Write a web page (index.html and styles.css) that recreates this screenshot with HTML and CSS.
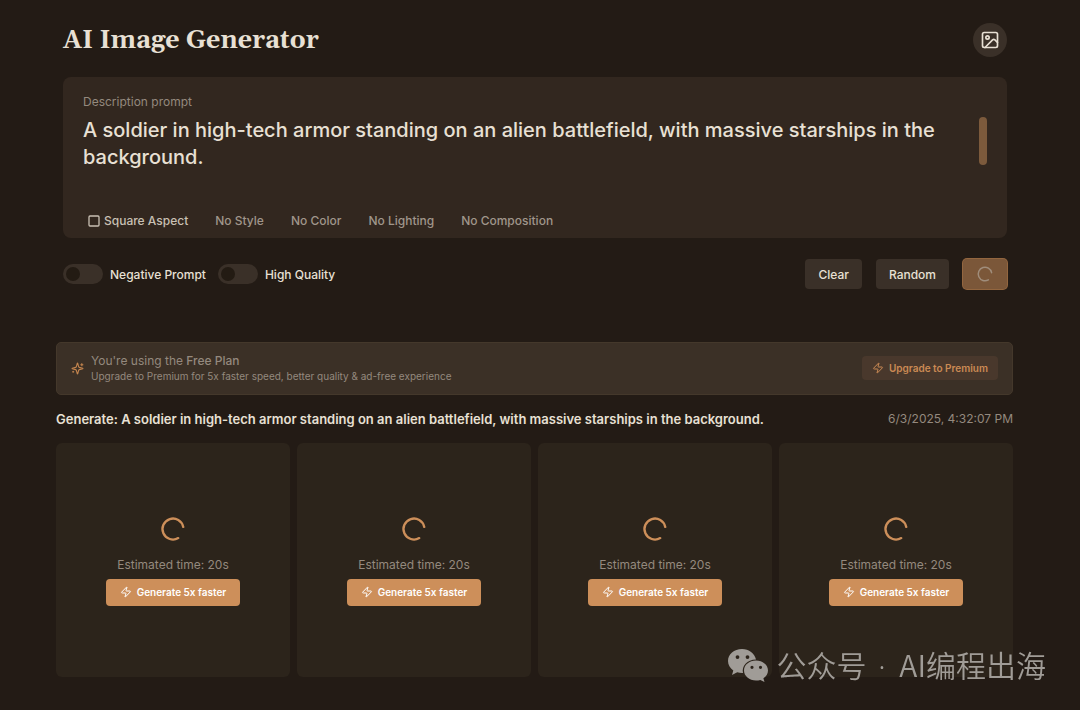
FILE: index.html
```html
<!DOCTYPE html>
<html lang="en">
<head>
    <meta charset="UTF-8">
    <meta name="viewport" content="width=device-width, initial-scale=1.0">
    <title>AI Image Generator</title>
    <link rel="stylesheet" href="styles.css">
</head>
<body>
    <!-- shared icons -->
    <svg width="0" height="0" class="sprite" aria-hidden="true">
        <symbol id="bolt" viewBox="0 0 24 24">
            <path d="M4 14a1 1 0 0 1-.78-1.63l9.9-10.2a.5.5 0 0 1 .86.46l-1.92 6.02A1 1 0 0 0 13 10h7a1 1 0 0 1 .78 1.63l-9.9 10.2a.5.5 0 0 1-.86-.46l1.92-6.02A1 1 0 0 0 11 14z"/>
        </symbol>
        <symbol id="loader" viewBox="0 0 24 24">
            <path d="M20.800 10.200A9 9 0 1 0 16.500 19.800"/>
        </symbol>
    </svg>

    <main class="page">
        <section class="generator">
            <header class="header">
                <h1>AI Image Generator</h1>
                <button class="gallery-btn" aria-label="Gallery">
                    <svg class="icon" viewBox="0 0 24 24">
                        <rect x="3" y="3" width="18" height="18" rx="2"/>
                        <circle cx="9" cy="9" r="2"/>
                        <path d="m21 15-3.086-3.086a2 2 0 0 0-2.828 0L6 21"/>
                    </svg>
                </button>
            </header>

            <div class="prompt-box">
                <label for="prompt">Description prompt</label>
                <div class="prompt-row">
                    <textarea id="prompt" spellcheck="false">A soldier in high-tech armor standing on an alien battlefield, with massive starships in the background.</textarea>
                    <div class="scroll-thumb"></div>
                </div>
                <div class="options">
                    <button class="option active">
                        <svg class="icon" viewBox="0 0 12 12"><rect x="1" y="1" width="10" height="10" rx="1"/></svg>
                        Square Aspect
                    </button>
                    <button class="option">No Style</button>
                    <button class="option">No Color</button>
                    <button class="option">No Lighting</button>
                    <button class="option">No Composition</button>
                </div>
            </div>

            <div class="controls">
                <div class="toggles">
                    <label class="toggle"><input type="checkbox">Negative Prompt</label>
                    <label class="toggle"><input type="checkbox">High Quality</label>
                </div>
                <div class="button-group">
                    <button class="btn">Clear</button>
                    <button class="btn">Random</button>
                    <button class="btn btn-loading" aria-label="Generating" disabled>
                        <svg class="icon"><use href="#loader"/></svg>
                    </button>
                </div>
            </div>
        </section>

        <section class="results">
            <div class="banner">
                <svg class="icon sparkles" viewBox="0 0 24 24">
                    <path d="M9.94 15.5A2 2 0 0 0 8.5 14.06l-6.14-1.58a.5.5 0 0 1 0-.96L8.5 9.94A2 2 0 0 0 9.94 8.5l1.58-6.14a.5.5 0 0 1 .96 0l1.58 6.14a2 2 0 0 0 1.44 1.44l6.14 1.58a.5.5 0 0 1 0 .96l-6.14 1.58a2 2 0 0 0-1.44 1.44l-1.58 6.14a.5.5 0 0 1-.96 0z"/>
                    <path d="M20 3v4M22 5h-4M4 17v2M5 18H3"/>
                </svg>
                <div class="banner-text">
                    <p class="plan">You're using the <strong>Free Plan</strong></p>
                    <p class="plan-info">Upgrade to Premium for 5x faster speed, better quality &amp; ad-free experience</p>
                </div>
                <button class="upgrade">
                    <svg class="icon"><use href="#bolt"/></svg>
                    Upgrade to Premium
                </button>
            </div>

            <div class="result-head">
                <h2>Generate: A soldier in high-tech armor standing on an alien battlefield, with massive starships in the background.</h2>
                <time datetime="2025-06-03T16:32:07">6/3/2025, 4:32:07 PM</time>
            </div>

            <div class="grid">
                <div class="card">
                    <svg class="icon spinner"><use href="#loader"/></svg>
                    <p>Estimated time: 20s</p>
                    <button class="faster"><svg class="icon"><use href="#bolt"/></svg>Generate 5x faster</button>
                </div>
                <div class="card">
                    <svg class="icon spinner"><use href="#loader"/></svg>
                    <p>Estimated time: 20s</p>
                    <button class="faster"><svg class="icon"><use href="#bolt"/></svg>Generate 5x faster</button>
                </div>
                <div class="card">
                    <svg class="icon spinner"><use href="#loader"/></svg>
                    <p>Estimated time: 20s</p>
                    <button class="faster"><svg class="icon"><use href="#bolt"/></svg>Generate 5x faster</button>
                </div>
                <div class="card">
                    <svg class="icon spinner"><use href="#loader"/></svg>
                    <p>Estimated time: 20s</p>
                    <button class="faster"><svg class="icon"><use href="#bolt"/></svg>Generate 5x faster</button>
                </div>
            </div>
        </section>
    </main>

    <div class="watermark" lang="zh-CN">
        <svg viewBox="0 0 40 33" aria-hidden="true">
            <path fill-rule="evenodd" d="M14 0C6 0 0 5.300 0 12c0 4 2 7.200 5.300 9.400L4 26l5.200-2.700c1.800.5 3.700.8 5.800.7C13.500 17 19 10.600 28 10.500 26.600 4.300 21 0 14 0zM9.500 6.200a1.900 1.900 0 1 1 0 3.800 1.900 1.900 0 0 1 0-3.800zM19.500 6.200a1.900 1.900 0 1 1 0 3.800 1.900 1.900 0 0 1 0-3.800z"/>
            <path fill-rule="evenodd" d="M28 11.500c-6.700 0-12 4.400-12 10s5.300 10 12 10c1.500 0 3-.2 4.300-.6L36.500 33l-1.100-3.700C38.200 27.500 40 24.700 40 21.500c0-5.600-5.300-10-12-10zM24 16.700a1.600 1.600 0 1 1 0 3.200 1.600 1.600 0 0 1 0-3.200zM32.500 16.700a1.600 1.600 0 1 1 0 3.200 1.600 1.600 0 0 1 0-3.200z"/>
        </svg>
        <span>公众号<span class="dot"> · </span>AI编程出海</span>
    </div>
</body>
</html>
```

FILE: styles.css
```css
* {
    box-sizing: border-box;
}

body {
    margin: 0;
    background-color: #231b15;
    color: #e8e0d4;
    font-family: Inter, "Liberation Sans", sans-serif;
    font-size: 13px;
}

h1, h2, p {
    margin: 0;
}

button {
    display: flex;
    align-items: center;
    justify-content: center;
    padding: 0;
    border: none;
    border-radius: 4px;
    color: inherit;
    font: inherit;
    cursor: pointer;
}

.sprite {
    position: absolute;
}

.icon {
    flex: none;
    fill: none;
    stroke: currentColor;
    stroke-width: 2;
    stroke-linecap: round;
    stroke-linejoin: round;
}

.page {
    padding: 23px 67px 32px 56px;
}

.generator {
    padding: 0 6px 0 7px;
}

.header {
    display: flex;
    align-items: center;
    justify-content: space-between;
    margin-bottom: 20px;
}

h1 {
    padding-top: 2px;
    font-family: Georgia, Gelasio, "DejaVu Serif", serif;
    font-size: 25px;
    line-height: 32px;
}

.gallery-btn {
    width: 34px;
    height: 34px;
    border-radius: 50%;
    background-color: #3a3028;
}

.gallery-btn .icon {
    width: 20px;
    height: 20px;
}

.prompt-box {
    padding: 17px 20px 6px;
    border-radius: 8px;
    background-color: #32271f;
}

.prompt-box label {
    display: block;
    margin-bottom: 7px;
    color: #94897e;
    font-size: 12px;
    line-height: 16px;
}

.prompt-row {
    display: flex;
    align-items: flex-start;
}

textarea {
    flex: 1;
    height: 51px;
    padding: 0;
    border: none;
    outline: none;
    resize: none;
    scrollbar-width: none;
    background: transparent;
    color: #e8e0d4;
    font-family: inherit;
    font-size: 20px;
    font-weight: 500;
    line-height: 27px;
}

.scroll-thumb {
    width: 8px;
    height: 48px;
    border-radius: 4px;
    background-color: #7c5a3c;
}

.options {
    display: flex;
    gap: 7px;
    margin-top: 41px;
}

.option {
    height: 23px;
    padding: 0 10px;
    background: transparent;
    color: #a0968b;
    font-size: 12px;
    font-weight: 500;
}

.option.active {
    gap: 4px;
    padding: 0 10px 0 5px;
    color: #c9c0b4;
}

.option .icon {
    width: 12px;
    height: 12px;
    stroke-width: 1.3;
}

.controls {
    display: flex;
    align-items: center;
    justify-content: space-between;
    margin-top: 21px;
}

.toggles {
    display: flex;
    gap: 12px;
}

.toggle {
    display: flex;
    align-items: center;
    gap: 7px;
    font-size: 12px;
    font-weight: 500;
}

.toggle input {
    display: flex;
    align-items: center;
    appearance: none;
    width: 40px;
    height: 20px;
    margin: 0;
    padding: 0 3px;
    border-radius: 10px;
    background-color: #3a3028;
}

.toggle input::before {
    content: "";
    width: 14px;
    height: 14px;
    border-radius: 50%;
    background-color: #231b13;
}

.toggle input:checked {
    justify-content: flex-end;
    background-color: #cd8f5a;
}

.button-group {
    display: flex;
    align-items: center;
    gap: 14px;
}

.btn {
    height: 30px;
    padding: 0 13px;
    background-color: #3a3028;
    font-size: 12px;
    font-weight: 500;
}

.btn-loading {
    width: 44px;
    padding: 0;
    background-color: #7b5739;
    box-shadow: 0 0 0 1px #93663f;
    color: #a08d7b;
}

.btn-loading .icon {
    width: 18px;
    height: 18px;
}

.results {
    margin-top: 53px;
}

.banner {
    display: flex;
    align-items: center;
    gap: 7px;
    padding: 9px 14px 10px;
    border: 1px solid #44382b;
    border-radius: 5px;
    background-color: #3b3026;
    color: #94897e;
}

.sparkles {
    width: 13px;
    height: 13px;
    color: #c4854e;
}

.banner-text {
    flex: 1;
}

.plan {
    font-size: 12px;
    line-height: 17px;
}

.plan strong {
    font-weight: 500;
}

.plan-info {
    font-size: 10px;
    line-height: 15px;
}

.upgrade {
    gap: 5px;
    height: 24px;
    padding: 0 10px;
    background-color: #49382c;
    color: #cb8a54;
    font-size: 10px;
    font-weight: 600;
}

.upgrade .icon,
.faster .icon {
    width: 12px;
    height: 12px;
}

.result-head {
    display: flex;
    align-items: center;
    justify-content: space-between;
    margin: 14px 0;
    line-height: 20px;
}

h2 {
    font-size: 13px;
    font-weight: 600;
}

time {
    color: #94897e;
    font-size: 12px;
}

.grid {
    display: grid;
    grid-template-columns: repeat(4, 1fr);
    gap: 7px;
}

.card {
    display: flex;
    flex-direction: column;
    align-items: center;
    justify-content: center;
    aspect-ratio: 1;
    border-radius: 6px;
    background-color: #2c241b;
}

.spinner {
    width: 28px;
    height: 28px;
    margin-bottom: 14px;
    color: #cd8f5a;
}

.card p {
    margin-bottom: 6px;
    color: #94897e;
    font-size: 12px;
    line-height: 16px;
}

.faster {
    gap: 5px;
    height: 27px;
    padding: 0 14px;
    background-color: #cd8f5a;
    color: #fff;
    font-size: 10px;
    font-weight: 600;
}

.watermark {
    position: fixed;
    right: 34px;
    bottom: 24px;
    display: flex;
    align-items: center;
    gap: 8px;
    color: #a09c97;
    font-family: "Noto Sans CJK SC", sans-serif;
    font-size: 30px;
    font-weight: 350;
    line-height: 40px;
}

.watermark svg {
    width: 40px;
    height: 33px;
    fill: currentColor;
}

.dot {
    padding: 0 6px 0 4px;
    font-family: "Noto Sans", sans-serif;
}
```
